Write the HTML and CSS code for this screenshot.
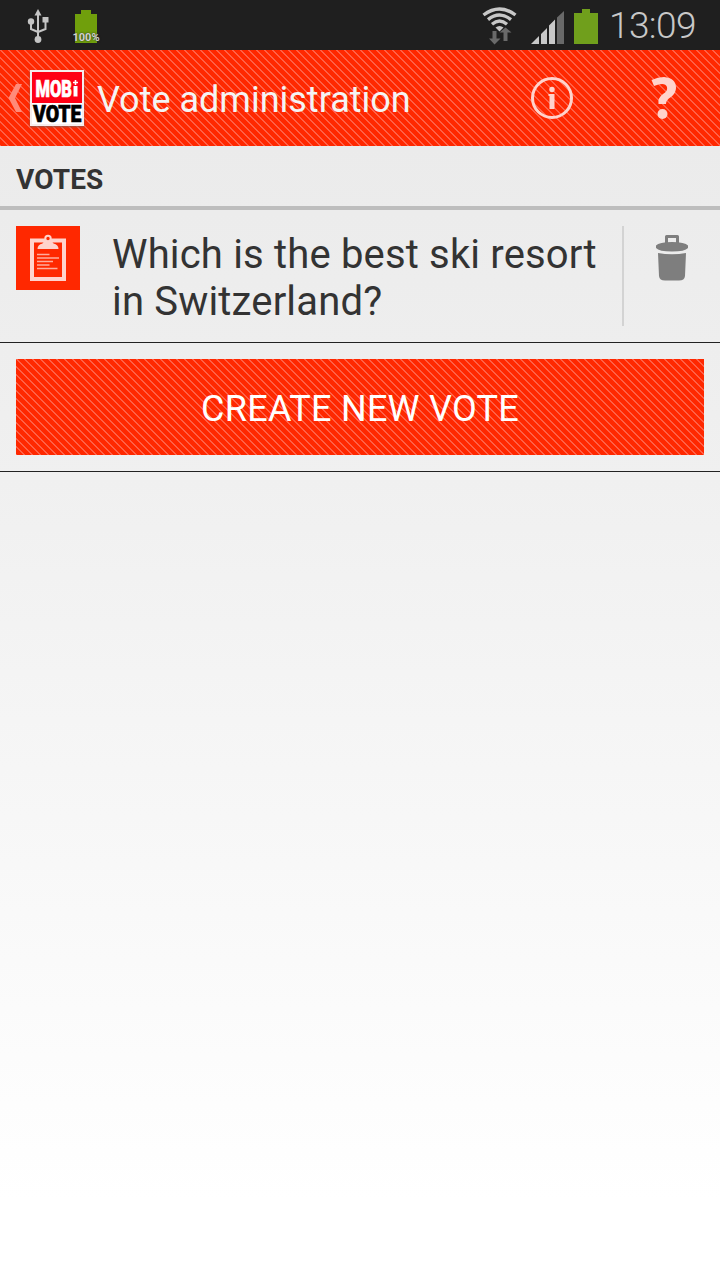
FILE: index.html
```html
<!DOCTYPE html>
<html lang="en">
<head>
<meta charset="utf-8">
<title>Vote administration</title>
<link rel="stylesheet" href="styles.css">
</head>
<body>
<div class="status">
  <svg class="usb" width="24" height="36" viewBox="0 0 24 36" fill="none" stroke="#c4c4c4" stroke-width="2">
    <path d="M12 5v26M5 14v7l7 3M19.500 12v9l-7.500 3"/>
    <g fill="#c4c4c4" stroke="none"><path d="M12 1l3.500 6.500h-7z"/><circle cx="5" cy="13.500" r="3.200"/><rect x="16.500" y="9" width="6" height="5.500"/><circle cx="12" cy="31.500" r="3.400"/></g>
  </svg>
  <div class="charge">
    <svg width="22" height="33" viewBox="0 0 22 33"><path fill="#709f0c" d="M0 4h6V0h10v4h6v29H0z"/></svg>
    <span class="percent">100%</span>
  </div>
  <div class="indicators">
    <svg width="36" height="38" viewBox="0 0 36 38">
      <g fill="none" stroke="#c8c8c8" stroke-width="3.400"><path d="M1.500 8Q17.500-4 33.500 8"/><path d="M6 12.700Q17.500 3.500 29 12.700"/><path d="M10 17.200Q17.500 11 25 17.200"/></g>
      <path fill="#c8c8c8" d="M13.500 20.500q4-3 8 0l-4 4z"/>
      <path fill="#6a6a6a" d="M10.500 24h4v7.500h4L12.500 37.500l-5.500-6h3.500zM21.500 34h4v-8.500h4L23.500 20.500l-6 5h4z"/>
    </svg>
    <svg class="signal" width="34" height="33" viewBox="0 0 34 33"><path fill="#c8c8c8" d="M0 33l8-8v8zM10 23l6-6v16h-6zM18 14.500l6-6V33h-6z"/><path fill="#696969" d="M26 6.500L33 0v33h-7z"/></svg>
    <svg class="battery" width="24" height="35" viewBox="0 0 24 35"><path fill="#709f1c" d="M0 4h8V0h8v4h8v31H0z"/></svg>
    <span class="clock">13:09</span>
  </div>
</div>
<header class="bar stripes">
  <svg class="back" width="15" height="30" viewBox="0 0 15 30"><path fill="#ff8b79" d="M8 1h6L7 15l7 14H8L.500 15z"/></svg>
  <div class="logo">
    <svg width="50" height="52" viewBox="0 0 50 52">
      <path fill="#ff0015" d="M0 0h50v31H0z"/>
      <text x="3.500" y="24.500" textLength="36.500" lengthAdjust="spacingAndGlyphs" class="logo-text">MOB</text>
      <path fill="#fff" d="M41.500 14h4v10.500h-4zM42.700 8h1.600v1.700H46v1.600h-1.700V13h-1.600v-1.700H41V9.700h1.700z"/>
      <text x="1" y="50" textLength="48.500" lengthAdjust="spacingAndGlyphs" class="logo-text dark">VOTE</text>
    </svg>
  </div>
  <h1 class="title">Vote administration</h1>
  <svg class="info" width="44" height="44" viewBox="0 0 44 44" fill="#ffd3cc"><circle cx="22" cy="22" r="19.500" fill="none" stroke="#ffd3cc" stroke-width="3"/><circle cx="22" cy="13.500" r="2.700"/><path d="M18.500 18h6v15h-5V20h-1z"/></svg>
  <svg class="help" width="26" height="44" viewBox="0 0 26 44" fill="#ffd3cc"><path d="M.500 4Q7 1 13 1Q25 2 25 12Q25 17 20 21Q15 24 15 28H7.500Q6.500 22 12 18Q17 15 16 11Q14 5.500 3 10z"/><circle cx="11.500" cy="38" r="5"/></svg>
</header>
<h2 class="section">VOTES</h2>
<div class="row">
  <svg class="clip" width="64" height="64" viewBox="0 0 64 64"><path fill="#ff2800" d="M0 0h64v64H0z"/><path fill="none" stroke="#ffd3cc" stroke-width="4" d="M16 14.500h32v38.500H16z"/><path fill="#ffd3cc" d="M21.500 23q0-4.500 5-5.500l3-4h5l3 4q5 1 5 5.500z"/><circle cx="32" cy="12.500" r="2.700" fill="#ff2800" stroke="#ffd3cc" stroke-width="2"/><path stroke="#ffac9d" stroke-width="1.700" d="M21 28.500h12.500M21 32h22M21 35.500h16M21 39h12.500M21 42.500h20.500"/></svg>
  <div class="question">Which is the best ski resort<br>in Switzerland?</div>
  <div class="remove"><svg width="32" height="46" viewBox="0 0 32 46" fill="#7e7e7e"><path d="M9 8V1.500Q9 0 10.500 0h11Q23 0 23 1.500V8h-3V3h-8v5z"/><path d="M0 10.500Q3 7 16 7t16 3.500v2.500Q29 16.500 16 16.500T0 13zM2 18q14 2.500 28 0l-1 23q-.5 4.500-6 4.500H9q-5.500 0-6-4.500z"/></svg></div>
</div>
<div class="action"><button class="create stripes">CREATE NEW VOTE</button></div>
</body>
</html>
```
FILE: styles.css
```css
* { box-sizing: border-box; }
body { margin: 0; height: 1280px; overflow: hidden; font-family: Roboto, sans-serif; color: #333; background: linear-gradient(#ebebeb 146px, #f0f0f0 480px, #fff 1200px); }
svg { display: block; flex: none; overflow: visible; }
.status { height: 50px; background: #1f1f1f; display: flex; align-items: flex-start; }
.usb { margin: 8px 0 0 26px; }
.charge { position: relative; margin: 10px 0 0 25px; }
.percent { position: absolute; left: -4px; top: 21px; width: 30px; text-align: center; font: bold 11px/14px Roboto, sans-serif; color: #d2d2d2; text-shadow: 0 0 2px #222; }
.indicators { margin-left: auto; padding-right: 23px; display: flex; align-items: flex-start; }
.indicators > svg:first-child { margin: 7px 13px 0 0; }
.signal { margin-top: 11px; }
.battery { margin: 9px 0 0 9px; }
.clock { margin-left: 11px; width: 88px; font-size: 37px; line-height: 52px; letter-spacing: -.6px; font-weight: 350; color: #c8c8c8; white-space: nowrap; }
.stripes { background: linear-gradient(45deg, #ff2800 .35px, #ff6047 .35px, #ff6047 1.06px, #ff2800 1.06px, #ff2800 5.3px, #ff6047 5.3px, #ff6047 6.7px, #ff2800 6.7px) 0 0 / 8px 8px; }
.bar { height: 96px; display: flex; align-items: flex-start; }
.back { margin: 33px 0 0 8px; }
.logo { width: 54px; height: 56px; margin: 20px 0 0 7px; border: 2px solid #f5eded; background: #fff; box-shadow: 0 1px 2px #8b5b50; }
.logo-text { font: 900 23.5px Roboto, sans-serif; fill: #fff; stroke: #fff; stroke-width: .7px; }
.dark { fill: #000; stroke: #000; }
.title { margin: 0 0 0 13px; font-size: 36px; line-height: 100px; font-weight: 400; color: #f4f4f4; white-space: nowrap; width: 433px; }
.info { margin-top: 26px; }
.help { margin: 26px 0 0 77px; }
.section { margin: 0; height: 64px; border-bottom: 4px solid #bdbdbd; padding-left: 16px; font-size: 28px; line-height: 68px; letter-spacing: .1px; }
.row { height: 133px; border-bottom: 1px solid #222; padding: 16px; display: flex; align-items: flex-start; }
.question { margin-left: 32px; width: 510px; font-size: 40px; line-height: 47px; letter-spacing: .17px; padding-top: 5px; white-space: nowrap; }
.remove { height: 100px; border-left: 2px solid #d3d3d3; padding: 9px 0 0 32px; }
.action { height: 129px; padding: 16px; border-bottom: 1px solid #222; }
.create { width: 100%; height: 96px; border: 0; padding: 3px 0 0; color: #fff; font: 36px Roboto, sans-serif; letter-spacing: .25px; }
```
